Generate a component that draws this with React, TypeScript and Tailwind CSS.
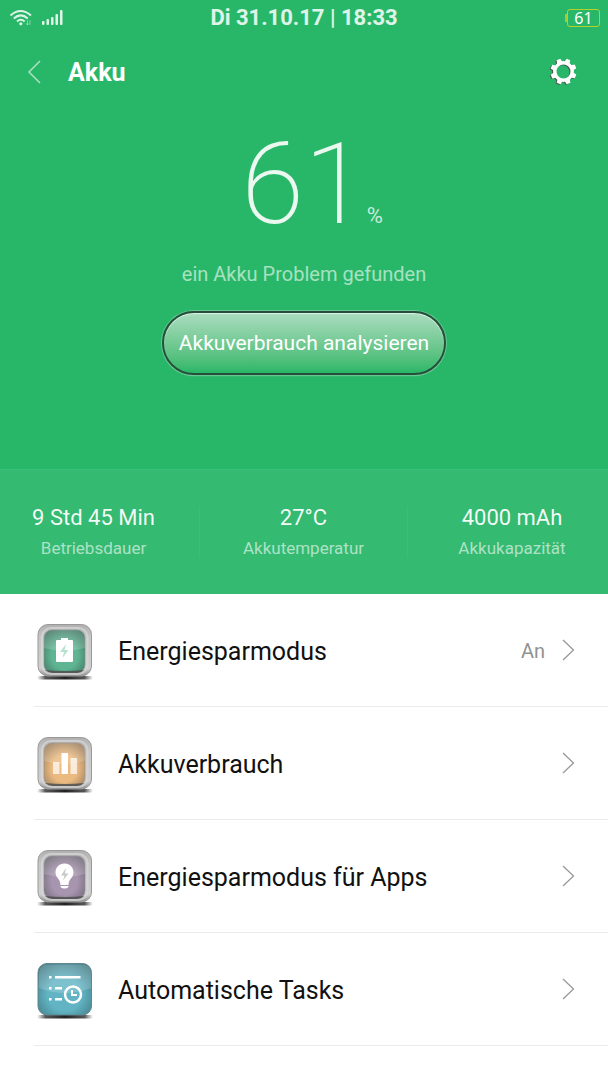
import type { ReactNode } from "react";

const stats = [
  { value: "9 Std 45 Min", label: "Betriebsdauer" },
  { value: "27°C", label: "Akkutemperatur" },
  { value: "4000 mAh", label: "Akkukapazität" },
];

type TileProps = {
  id: string;
  inner: string;
  outer: string;
  framed?: boolean;
  children: ReactNode;
};

function Tile({ id, inner, outer, framed = true, children }: TileProps) {
  return (
    <svg viewBox="17 10 56 60" className="h-[60px] w-14 shrink-0" aria-hidden="true">
      <defs>
        <linearGradient id={`${id}-frame`} x1="0" y1="0" x2="0" y2="1">
          <stop offset="0" stopColor="#b0b0b0" />
          <stop offset="0.25" stopColor="#c6c6c6" />
          <stop offset="0.85" stopColor="#cfcfcf" />
          <stop offset="1" stopColor="#8f8f8f" />
        </linearGradient>
        <radialGradient id={`${id}-face`} cx="0.5" cy="0.6" r="0.7">
          <stop offset="0" stopColor={inner} />
          <stop offset="0.45" stopColor={inner} />
          <stop offset="1" stopColor={outer} />
        </radialGradient>
        <linearGradient id={`${id}-shadow`} x1="0" y1="0" x2="1" y2="0">
          <stop offset="0" stopColor="#555" stopOpacity="0" />
          <stop offset="0.15" stopColor="#444" stopOpacity="0.9" />
          <stop offset="0.5" stopColor="#222" />
          <stop offset="0.85" stopColor="#444" stopOpacity="0.9" />
          <stop offset="1" stopColor="#555" stopOpacity="0" />
        </linearGradient>
      </defs>
      <rect x="17" y="66" width="56" height="3.5" rx="1.7" fill={`url(#${id}-shadow)`} />
      {framed ? (
        <>
          <rect x="18" y="14.5" width="53.5" height="51.5" rx="10" fill={`url(#${id}-frame)`} stroke="#999" />
          <rect x="22" y="18" width="45.5" height="46" rx="9" fill="none" stroke="#d9d9d9" strokeWidth="2" strokeOpacity="0.7" />
          <rect x="24" y="20" width="41" height="42.5" rx="8" fill={`url(#${id}-face)`} stroke="#8d8d8d" strokeOpacity="0.5" />
          <path d="M25 60Q45 62 64 60Q61 63 57 63H33Q29 63 25 60Z" fill="#4a4a4a" fillOpacity="0.8" />
          <path d="M24 38V28Q24 20 32 20H57Q65 20 65 28V38Q45 44 24 38Z" fill="#fff" fillOpacity="0.16" />
        </>
      ) : (
        <>
          <rect x="18" y="14.5" width="53.5" height="51.5" rx="9" fill={`url(#${id}-face)`} stroke="#60858c" />
          <path d="M19 39V24Q19 15.5 28 15.5H62Q71 15.5 71 24V39Q45 49 19 39Z" fill="#fff" fillOpacity="0.18" />
        </>
      )}
      {children}
    </svg>
  );
}

const rows = [
  {
    title: "Energiesparmodus",
    status: "An",
    icon: (
      <Tile id="saver" inner="#5fb592" outer="#3d6f5e">
        <path d="M41 28H48V30H52Q53 30 53 31V51Q53 52 52 52H37Q36 52 36 51V31Q36 30 37 30H41Z" fill="#fff" />
        <path d="M46 34L40 42H44L42.5 48L48.5 40H44.5Z" fill="#b5e3ce" />
      </Tile>
    ),
  },
  {
    title: "Akkuverbrauch",
    icon: (
      <Tile id="usage" inner="#ebba80" outer="#957859">
        <rect x="33" y="39" width="6.5" height="12" fill="#fff" fillOpacity="0.7" />
        <rect x="41.5" y="30" width="6.5" height="21" fill="#fff" />
        <rect x="50.5" y="35" width="6.5" height="16" fill="#fff" fillOpacity="0.7" />
      </Tile>
    ),
  },
  {
    title: "Energiesparmodus für Apps",
    icon: (
      <Tile id="apps" inner="#a794af" outer="#69636f">
        <path d="M44.5 27.5C39 27.5 35.5 31.5 35.5 36.5C35.5 42 40.5 43 40.5 49H48.5C48.5 43 53.5 42 53.5 36.5C53.5 31.5 50 27.5 44.5 27.5Z" fill="#fff" />
        <path d="M40.5 50H48.5V51Q47 52.5 44.5 52.5Q42 52.5 40.5 51Z" fill="#fff" />
        <path d="M46 32L41 39.5H44.5L43 44.5L48.5 37.5H45Z" fill="#c9c9c9" />
      </Tile>
    ),
  },
  {
    title: "Automatische Tasks",
    icon: (
      <Tile id="tasks" inner="#62b4c4" outer="#3f7680" framed={false}>
        <g fill="#fff">
          <rect x="29" y="27" width="2.5" height="2.5" />
          <rect x="35" y="27" width="25.5" height="2.5" />
          <rect x="29" y="38" width="2.5" height="2.5" />
          <rect x="35" y="38" width="7" height="2.5" />
          <rect x="29" y="49" width="2.5" height="2.5" />
          <rect x="35" y="49" width="7" height="2.5" />
        </g>
        <circle cx="53" cy="45.5" r="8" fill="none" stroke="#fff" strokeWidth="2.5" />
        <path d="M52 41V46H57" fill="none" stroke="#fff" strokeWidth="2" />
      </Tile>
    ),
  },
];

function StatusBar() {
  return (
    <div className="grid h-9 grid-cols-[1fr_auto_1fr] items-center px-2">
      <div className="flex items-center gap-2 text-white/85">
        <svg viewBox="0 0 26 18" className="h-[18px] w-[26px]" fill="none" stroke="currentColor" strokeWidth="2" aria-label="WLAN">
          <path d="M2.5 6.5Q12.5 -2.5 23 6.5" />
          <path d="M5.8 9.5Q12.8 3.2 19.7 9.5" />
          <path d="M9 12.5Q12.8 9 16.6 12.5" />
          <circle cx="12.8" cy="14.8" r="1.6" fill="currentColor" stroke="none" />
          <path d="M19.5 11V16M18 14.3L19.5 16L21 14.3M22 16V11" strokeWidth="1" strokeOpacity="0.45" />
        </svg>
        <svg viewBox="0 0 22 16" className="h-4 w-[22px]" fill="currentColor" aria-label="Mobilfunk">
          <rect x="0" y="11" width="2.5" height="4" rx="1" />
          <rect x="4.5" y="9" width="2.5" height="6" rx="1" />
          <rect x="9" y="7" width="2.5" height="8" rx="1" />
          <rect x="13.5" y="4" width="2.5" height="11" rx="1" />
          <rect x="18" y="0" width="2.5" height="15" rx="1" />
        </svg>
      </div>
      <p className="text-[22px] leading-6 font-bold text-white/85">Di 31.10.17 | 18:33</p>
      <div className="flex items-center justify-end">
        <span className="h-2 w-0.5 bg-[#a8c832]" />
        <span className="flex h-[18px] w-[33px] items-center justify-center rounded-[3px] border border-[#b4d02c] font-['Noto_Sans'] text-base leading-4 text-white">
          61
        </span>
      </div>
    </div>
  );
}

function Gear() {
  const teeth = [0, 45, 90, 135, 180, 225, 270, 315];
  const shape = (
    <>
      <circle cx="14" cy="14" r="8.7" fill="none" stroke="currentColor" strokeWidth="3.4" />
      {teeth.map((angle) => (
        <path key={angle} d="M11 6L12 1H16L17 6Z" fill="currentColor" transform={`rotate(${angle + 22} 14 14)`} />
      ))}
    </>
  );
  return (
    <svg viewBox="0 0 28 28" className="size-7" aria-hidden="true">
      <g className="text-[#4d5c54]" transform="translate(-0.6 0.2)">{shape}</g>
      <g className="text-white" transform="translate(0.5 -0.5)">{shape}</g>
    </svg>
  );
}

export default function App() {
  return (
    <main className="min-h-screen bg-white font-[Roboto,sans-serif] text-[#111]">
      <section className="bg-[#28b768] text-white">
        <StatusBar />
        <header className="flex h-[72px] items-center pr-[31px] pl-6">
          <button type="button" aria-label="Zurück" className="flex h-10 w-11 items-center text-white/60">
            <svg viewBox="0 0 20 26" className="h-[26px] w-5" fill="none" stroke="currentColor" strokeWidth="1.5">
              <path d="M16 2L5 13L16 24" />
            </svg>
          </button>
          <h1 className="flex-1 pt-0.5 text-[25px] leading-8 font-bold">Akku</h1>
          <button type="button" aria-label="Einstellungen">
            <Gear />
          </button>
        </header>

        <div className="flex h-[361px] flex-col items-center pt-4">
          <p className="flex items-baseline pl-4 text-white/90">
            <span className="text-[114px] leading-[120px] font-extralight">61</span>
            <span className="text-[22px] leading-6 text-white/75">%</span>
          </p>
          <p className="mt-4 text-xl leading-7 text-white/60">ein Akku Problem gefunden</p>
          <button
            type="button"
            className="mt-[23px] h-16 w-[284px] rounded-full border-2 border-[#24503a] bg-linear-to-b from-[#a9dcbf] to-[#28b768] text-[21px] leading-7 whitespace-nowrap shadow-[0_0_0_1px_#69c692,0_1px_1px_#a5dcbd,inset_0_1px_1px_#e0f3e8]"
          >
            Akkuverbrauch analysieren
          </button>
        </div>

        <dl className="grid h-[125px] grid-cols-[200fr_208fr_200fr] items-center border-t border-[#3cbf78] bg-[#34ba71] text-center">
          {stats.map((stat) => (
            <div
              key={stat.label}
              className="flex h-[52px] flex-col-reverse justify-center border-r border-white/5 first:pr-3 last:border-r-0 last:pl-2"
            >
              <dt className="text-[17px] leading-6 text-white/60">{stat.label}</dt>
              <dd className="mb-1 text-[22px] leading-7 text-white/95">{stat.value}</dd>
            </div>
          ))}
        </dl>
      </section>

      <ul className="pl-[34px]">
        {rows.map((row) => (
          <li key={row.title} className="border-b border-[#ebebeb]">
            <button type="button" className="flex h-28 w-full items-center pr-[33px] pl-[3px] text-left">
              {row.icon}
              <span className="flex-1 pt-1 pl-[25px] text-[25px] leading-8">{row.title}</span>
              {row.status && <span className="pt-0.5 pr-4 text-xl leading-7 text-[#929292]">{row.status}</span>}
              <svg viewBox="0 0 14 24" className="h-6 w-3.5" fill="none" stroke="#999" strokeWidth="1.3" aria-hidden="true">
                <path d="M2 2L12.5 12L2 22" />
              </svg>
            </button>
          </li>
        ))}
      </ul>
    </main>
  );
}
